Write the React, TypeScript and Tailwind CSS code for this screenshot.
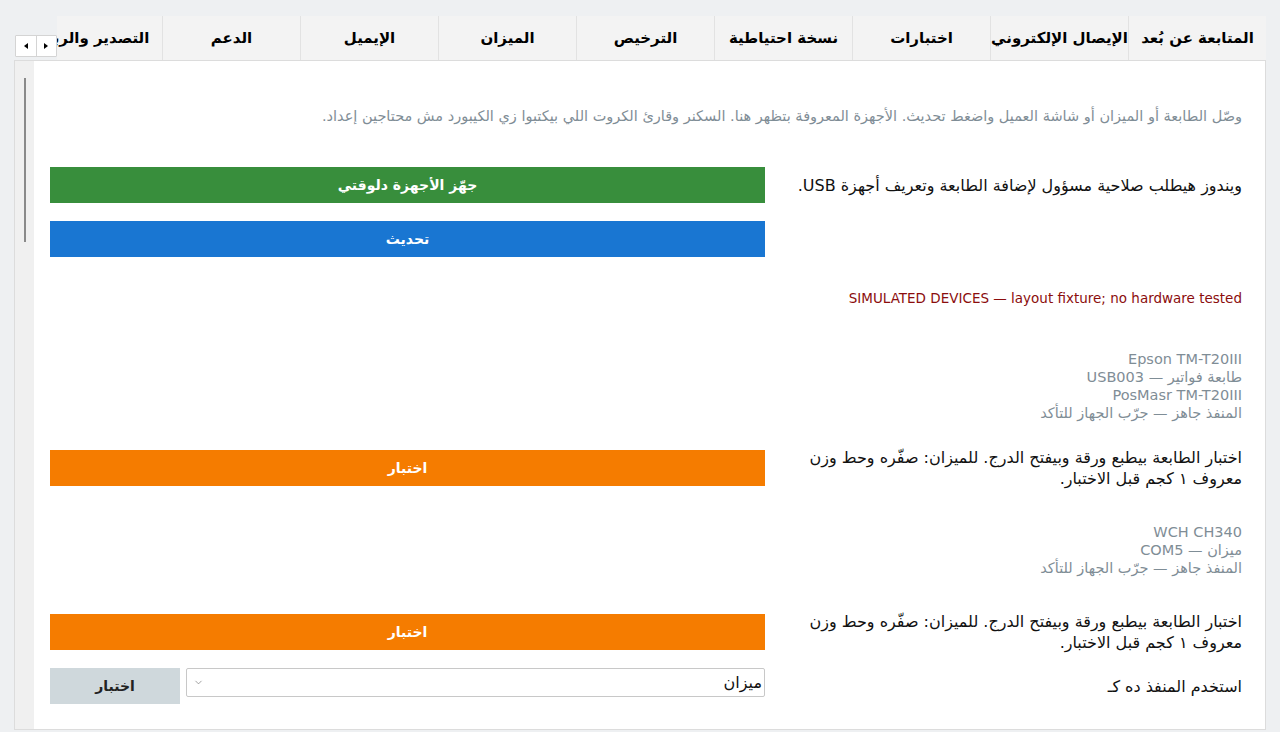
import { ChevronDown } from "lucide-react";

const TABS = [
  "المتابعة عن بُعد",
  "الإيصال الإلكتروني",
  "اختبارات",
  "نسخة احتياطية",
  "الترخيص",
  "الميزان",
  "الإيميل",
  "الدعم",
  "التصدير والربط",
];

const TEST_NOTE =
  "اختبار الطابعة بيطبع ورقة وبيفتح الدرج. للميزان: صفّره وحط وزن معروف ١ كجم قبل الاختبار.";

type Device = { lines: string[] };

const DEVICES: Device[] = [
  {
    lines: [
      "Epson TM-T20III",
      "طابعة فواتير — USB003",
      "PosMasr TM-T20III",
      "المنفذ جاهز — جرّب الجهاز للتأكد",
    ],
  },
  {
    lines: ["WCH CH340", "ميزان — COM5", "المنفذ جاهز — جرّب الجهاز للتأكد"],
  },
];

function TabStrip() {
  return (
    <div className="relative h-[44px] mx-[14px]">
      <div className="ml-[43px] h-full overflow-hidden flex" dir="rtl">
        {TABS.map((t) => (
          <div
            key={t}
            className="w-[138px] shrink-0 h-full bg-[#f3f3f3] border-l border-[#e2e2e2] flex items-center justify-center text-[15px] font-bold text-black whitespace-nowrap"
          >
            {t}
          </div>
        ))}
      </div>
      {/* scroll arrows over the clipped tabs */}
      <div className="absolute left-[1px] top-[19px] h-[22px] w-[42px] flex bg-white border border-[#d4d4d4] rounded-[1px]">
        <div className="flex-1 flex items-center justify-center border-r border-[#d4d4d4]">
          <span className="block w-0 h-0 border-y-[3px] border-y-transparent border-r-[4px] border-r-black" />
        </div>
        <div className="flex-1 flex items-center justify-center">
          <span className="block w-0 h-0 border-y-[3px] border-y-transparent border-l-[4px] border-l-black" />
        </div>
      </div>
    </div>
  );
}

function WideButton({ label, color }: { label: string; color: string }) {
  return (
    <button
      className={`h-[36px] w-[715px] shrink-0 text-white text-[14px] font-bold ${color}`}
    >
      {label}
    </button>
  );
}

function DeviceBlock({ device, className }: { device: Device; className: string }) {
  return (
    <div className={`text-[14.5px] leading-[18px] text-[#7f8d96] ${className}`}>
      {device.lines.map((l) => (
        <div key={l}>{l}</div>
      ))}
    </div>
  );
}

export default function App() {
  return (
    <div className="w-[1280px] h-[732px] overflow-hidden bg-[#eef0f2] pt-4 font-['DejaVu_Sans',sans-serif]">
      <TabStrip />

      <div className="ml-[14px] w-[1252px] h-[670px] bg-white border border-[#dcdcdc] flex">
        {/* scrollbar on the left (rtl) */}
        <div className="w-[19px] shrink-0 bg-[#f0f0f0] relative">
          <div className="absolute left-[9px] top-[17px] w-[2px] h-[164px] bg-[#8a8a8a]" />
        </div>

        <div className="flex-1 pl-[16px] pr-[23px] pt-[46px]" dir="rtl">
          <p className="text-[14.5px] leading-[18px] text-[#7f8d96]">
            وصّل الطابعة أو الميزان أو شاشة العميل واضغط تحديث. الأجهزة المعروفة
            بتظهر هنا. السكنر وقارئ الكروت اللي بيكتبوا زي الكيبورد مش محتاجين إعداد.
          </p>

          <div className="mt-[42px] flex items-center justify-between">
            <span className="text-[16px] leading-[21px] text-[#111]">
              ويندوز هيطلب صلاحية مسؤول لإضافة الطابعة وتعريف أجهزة USB.
            </span>
            <WideButton label="جهّز الأجهزة دلوقتي" color="bg-[#388e3c]" />
          </div>

          <div className="mt-[18px] flex justify-end">
            <WideButton label="تحديث" color="bg-[#1976d2]" />
          </div>

          <p className="mt-[32px] text-[13.5px] leading-[18px] text-[#8b0d0d]">
            SIMULATED DEVICES — layout fixture; no hardware tested
          </p>

          <DeviceBlock device={DEVICES[0]} className="mt-[43px]" />

          <div className="mt-[25px] flex items-center justify-between">
            <span className="w-[436px] text-[16px] leading-[21px] text-[#111]">{TEST_NOTE}</span>
            <WideButton label="اختبار" color="bg-[#f57c00]" />
          </div>

          <DeviceBlock device={DEVICES[1]} className="mt-[34px]" />

          <div className="mt-[34px] flex items-center justify-between">
            <span className="w-[436px] text-[16px] leading-[21px] text-[#111]">{TEST_NOTE}</span>
            <WideButton label="اختبار" color="bg-[#f57c00]" />
          </div>

          <div className="mt-[15px] flex items-start justify-between">
            <span className="mt-[8px] text-[16px] leading-[21px] text-[#111]">
              استخدم المنفذ ده كـ
            </span>
            <div className="flex gap-[6px] w-[715px]">
              <div className="flex-1 h-[29px] border border-[#c8c8c8] rounded-[2px] bg-white flex items-center justify-between pr-[2px] pl-[6px] text-[16px] text-[#111]">
                <span>ميزان</span>
                <ChevronDown size={11} strokeWidth={1.5} className="text-[#777]" />
              </div>
              <button className="w-[130px] h-[36px] bg-[#cfd8dc] text-[14px] font-bold text-[#222]">
                اختبار
              </button>
            </div>
          </div>
        </div>
      </div>
    </div>
  );
}
